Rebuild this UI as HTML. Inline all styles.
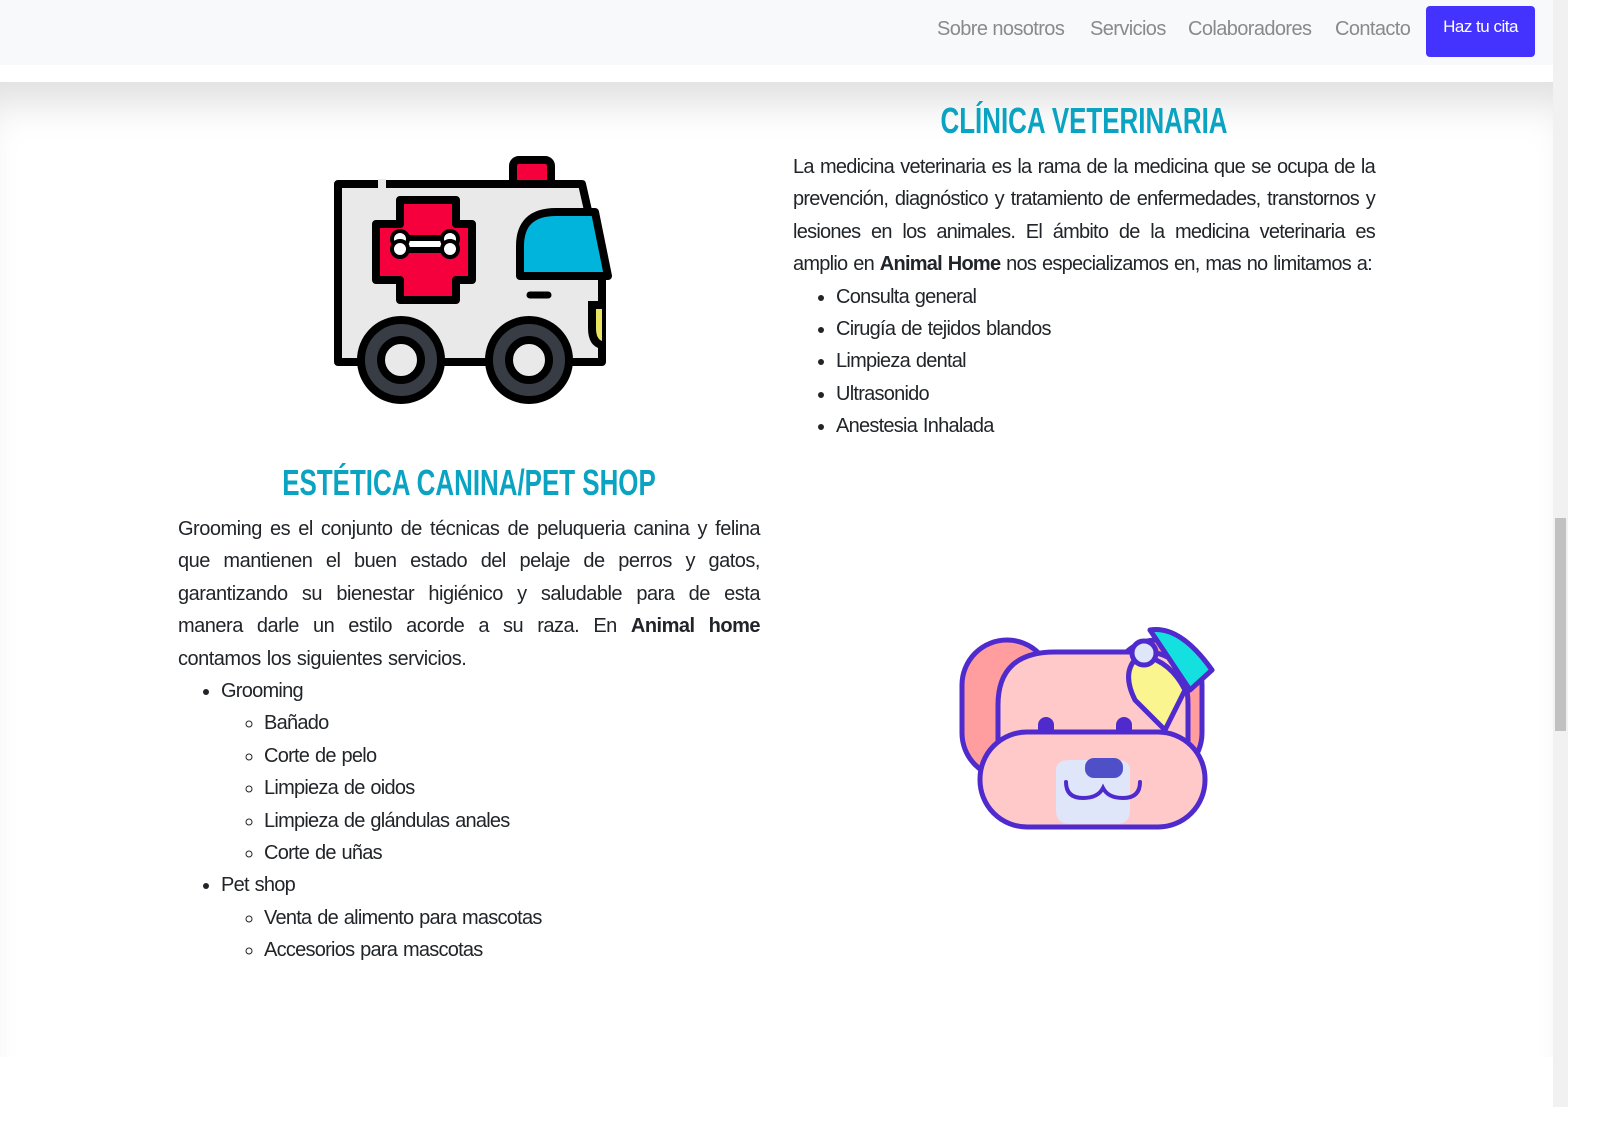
<!DOCTYPE html>
<html><head><meta charset="utf-8"><style>
body{margin:0;width:1599px;height:1129px;overflow:hidden;background:#fff;font-family:"Liberation Sans",sans-serif;color:#212529;position:relative}
.hdr{position:absolute;left:0;top:0;width:1553px;height:65px;background:#f8f9fa}
.nav{position:absolute;top:18px;font-size:20px;color:#8a8a8a;letter-spacing:-0.6px}
.btn{position:absolute;left:1426px;top:6px;width:109px;height:51px;background:#4433ff;border-radius:4px;color:#fff;font-size:17px;text-align:center;line-height:42px;letter-spacing:-0.5px}
.sec{position:absolute;left:0;top:82px;width:1553px;height:975px;background:#fff;box-shadow:inset 0 40px 40px -20px rgba(0,0,0,.13)}
.sb{position:absolute;left:1553px;top:0;width:15px;height:1107px;background:#f1f1f1}
.th{position:absolute;left:1555px;top:518px;width:11px;height:213px;background:#c1c1c1}
h2{position:absolute;margin:0;font-weight:bold;color:#0aa3c2;font-size:36px;text-align:center;transform:scaleX(0.72);transform-origin:center}
.txt{position:absolute;font-size:20px;line-height:32.4px;text-align:justify;letter-spacing:-0.75px;word-spacing:1px}
ul{margin:0;padding-left:43px}
ul ul{list-style:circle}
b{font-weight:bold}
</style></head><body>
<div class="hdr"></div>
<div class="nav" style="left:937px">Sobre nosotros</div>
<div class="nav" style="left:1090px">Servicios</div>
<div class="nav" style="left:1188px">Colaboradores</div>
<div class="nav" style="left:1335px">Contacto</div>
<div class="btn">Haz tu cita</div>
<div class="sec"></div>
<h2 style="left:793px;width:582px;top:100px">CLÍNICA VETERINARIA</h2>
<div class="txt" style="left:793px;top:151px;width:582px">La medicina veterinaria es la rama de la medicina que se ocupa de la prevención, diagnóstico y tratamiento de enfermedades, transtornos y lesiones en los animales. El ámbito de la medicina veterinaria es amplio en <b>Animal Home</b> nos especializamos en, mas no limitamos a:
<ul style="text-align:left"><li>Consulta general</li><li>Cirugía de tejidos blandos</li><li>Limpieza dental</li><li>Ultrasonido</li><li>Anestesia Inhalada</li></ul></div>
<h2 style="left:178px;width:582px;top:462px">ESTÉTICA CANINA/PET SHOP</h2>
<div class="txt" style="left:178px;top:513px;width:582px;letter-spacing:-0.5px">Grooming es el conjunto de técnicas de peluqueria canina y felina que mantienen el buen estado del pelaje de perros y gatos, garantizando su bienestar higiénico y saludable para de esta manera darle un estilo acorde a su raza. En <b>Animal home</b> contamos los siguientes servicios.
<ul style="text-align:left;letter-spacing:-0.75px"><li>Grooming<ul><li>Bañado</li><li>Corte de pelo</li><li>Limpieza de oidos</li><li>Limpieza de glándulas anales</li><li>Corte de uñas</li></ul></li><li>Pet shop<ul><li>Venta de alimento para mascotas</li><li>Accesorios para mascotas</li></ul></li></ul></div>
<svg style="position:absolute;left:320px;top:150px" width="300" height="260" viewBox="0 0 300 260">
<rect x="193" y="10" width="38" height="28" rx="6" fill="#f5003c" stroke="#000" stroke-width="8"/>
<path d="M18 34 H262 L282 122 V212 H18 Z" fill="#e9e9e9" stroke="#000" stroke-width="8" stroke-linejoin="round"/>
<path d="M58 34 H66" stroke="#e9e9e9" stroke-width="10"/>
<path d="M80 50 H136 V74 H152 V130 H136 V150 H80 V130 H56 V74 H80 Z" fill="#f5003c" stroke="#000" stroke-width="8" stroke-linejoin="round"/>
<path d="M84 94 h42" stroke="#000" stroke-width="18" stroke-linecap="round"/><path d="M84 94 h42" stroke="#fff" stroke-width="6" stroke-linecap="round"/>
<circle cx="80" cy="89" r="8" fill="#fff" stroke="#000" stroke-width="4"/><circle cx="80" cy="99" r="8" fill="#fff" stroke="#000" stroke-width="4"/>
<circle cx="130" cy="89" r="8" fill="#fff" stroke="#000" stroke-width="4"/><circle cx="130" cy="99" r="8" fill="#fff" stroke="#000" stroke-width="4"/>
<path d="M200 126 V96 Q200 62 236 62 H275 L288 126 Z" fill="#00b4db" stroke="#000" stroke-width="8" stroke-linejoin="round"/>
<path d="M210 145 h18" stroke="#000" stroke-width="7" stroke-linecap="round"/>
<path d="M282 155 H272 V178 Q272 193 282 195" fill="#eae35f" stroke="#000" stroke-width="8"/>
<circle cx="81" cy="210" r="40" fill="#373c45" stroke="#000" stroke-width="8"/><circle cx="81" cy="210" r="20" fill="#e9e9e9" stroke="#000" stroke-width="8"/>
<circle cx="209" cy="210" r="40" fill="#373c45" stroke="#000" stroke-width="8"/><circle cx="209" cy="210" r="20" fill="#e9e9e9" stroke="#000" stroke-width="8"/>
</svg>
<svg style="position:absolute;left:950px;top:610px" width="270" height="230" viewBox="0 0 270 230">
<rect x="12" y="30" width="90" height="138" rx="45" fill="#ff9d9f" stroke="#4f2acd" stroke-width="5"/>
<rect x="162" y="30" width="90" height="138" rx="45" fill="#ff9d9f" stroke="#4f2acd" stroke-width="5"/>
<path d="M48 150 V95 Q48 42 105 42 H195 Q238 42 238 95 V150 Z" fill="#ffc9ca" stroke="#4f2acd" stroke-width="5"/>
<rect x="88" y="107" width="16" height="28" rx="8" fill="#4f2acd"/><rect x="166" y="107" width="16" height="28" rx="8" fill="#4f2acd"/>
<path d="M200 20 Q230 15 262 60 L240 80 Z" fill="#15e0e0" stroke="#4f2acd" stroke-width="5" stroke-linejoin="round"/>
<path d="M190 45 Q170 60 185 90 L215 120 L235 80 Q220 50 190 45Z" fill="#faf58e" stroke="#4f2acd" stroke-width="5" stroke-linejoin="round"/>
<circle cx="194" cy="43" r="12" fill="#dfe6fa" stroke="#4f2acd" stroke-width="5"/>
<rect x="30" y="122" width="225" height="95" rx="47" fill="#ffc9ca" stroke="#4f2acd" stroke-width="5"/>
<path d="M106 160 Q106 150 120 150 H166 Q180 150 180 160 V200 Q180 214 166 214 H120 Q106 214 106 200Z" fill="#dfe6fa"/>
<rect x="135" y="148" width="38" height="20" rx="9" fill="#4f50c8"/>
<path d="M116 172 Q116 188 133 188 Q148 188 153 178 Q158 188 173 188 Q190 188 190 172" fill="none" stroke="#4f2acd" stroke-width="4" stroke-linecap="round"/>
</svg>
<div class="sb"></div><div class="th"></div>
</body></html>
